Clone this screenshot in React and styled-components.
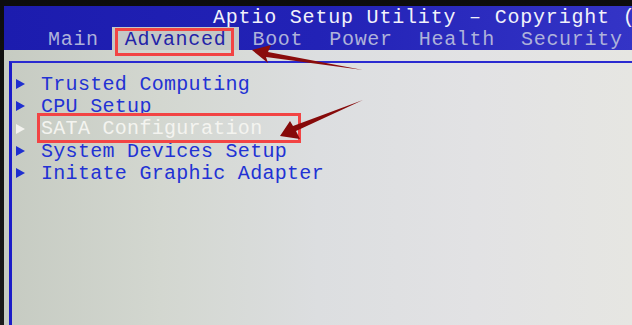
import styled, { createGlobalStyle } from "styled-components";

const GlobalStyle = createGlobalStyle`
  html, body {
    margin: 0;
    padding: 0;
    background: #111;
  }
  #root {
    width: 632px;
    height: 325px;
  }
`;

const Screen = styled.div`
  position: relative;
  width: 632px;
  height: 325px;
  overflow: hidden;
  display: flex;
  flex-direction: column;
  padding: 6px 0 0 4px;
  box-sizing: border-box;
  background: linear-gradient(180deg, #0d0d0d 0%, #1b1b1b 100%);
  font-family: "Liberation Mono", "DejaVu Sans Mono", monospace;
`;

const Header = styled.div`
  display: flex;
  flex-direction: column;
  height: 44px;
  background: linear-gradient(90deg, #1c1cae 0%, #2222b6 50%, #3434c6 100%);
`;

const Title = styled.div`
  height: 21px;
  line-height: 23px;
  padding-left: 209px;
  color: #f2f2fa;
  font-size: 20px;
  letter-spacing: 0.8px;
  white-space: nowrap;
  overflow: hidden;
`;

const Tabs = styled.div`
  display: flex;
  height: 23px;
  padding-left: 31px;
  white-space: nowrap;
  overflow: hidden;
`;

const Tab = styled.div`
  position: relative;
  padding: 0 13px;
  line-height: 25px;
  font-size: 20px;
  letter-spacing: 0.7px;
  color: ${(p) => (p.$active ? "#2424a8" : "#aeb2da")};
  background: ${(p) => (p.$active ? "#c4c8c6" : "transparent")};
`;

const Body = styled.div`
  flex: 1;
  display: flex;
  padding: 11px 0 0 5px;
  background: linear-gradient(
    90deg,
    #c6cbc2 0%,
    #d3d7d0 25%,
    #dcdee0 50%,
    #e2e2e4 75%,
    #e6e6e2 100%
  );
`;

const Frame = styled.div`
  flex: 1;
  border-top: 2px solid #2a2ad0;
  border-left: 3px solid #1c1cc8;
  padding: 10px 0 0 4px;
  display: flex;
  flex-direction: column;
`;

const Item = styled.div`
  display: flex;
  align-items: center;
  height: 22.3px;
  font-size: 20px;
  letter-spacing: 0.3px;
  white-space: nowrap;
  color: ${(p) => (p.$selected ? "#f4f4f0" : "#2232d4")};
`;

const Pointer = styled.span`
  width: 0;
  height: 0;
  border-top: 5.5px solid transparent;
  border-bottom: 5.5px solid transparent;
  border-left: 9px solid ${(p) => (p.$selected ? "#f4f4f0" : "#1f2fd0")};
  margin-right: 16px;
`;

const Mark = styled.div`
  position: absolute;
  border: 3px solid #f24444;
  box-sizing: border-box;
  pointer-events: none;
`;

const Arrows = styled.svg`
  position: absolute;
  left: 0;
  top: 0;
  pointer-events: none;
`;

const tabs = ["Main", "Advanced", "Boot", "Power", "Health", "Security"];

const items = [
  "Trusted Computing",
  "CPU Setup",
  "SATA Configuration",
  "System Devices Setup",
  "Initate Graphic Adapter",
];

export default function App() {
  return (
    <>
      <GlobalStyle />
      <Screen>
        <Header>
          <Title>Aptio Setup Utility – Copyright (C)</Title>
          <Tabs>
            {tabs.map((t) => (
              <Tab key={t} $active={t === "Advanced"}>
                {t}
              </Tab>
            ))}
          </Tabs>
        </Header>
        <Body>
          <Frame>
            {items.map((it, i) => (
              <Item key={it} $selected={i === 2}>
                <Pointer $selected={i === 2} />
                {it}
              </Item>
            ))}
          </Frame>
        </Body>

        <Mark style={{ left: 115, top: 28, width: 119, height: 28 }} />
        <Mark style={{ left: 37, top: 113, width: 264, height: 30 }} />

        <Arrows width="632" height="325" viewBox="0 0 632 325">
          <polygon
            fill="#8a0c0c"
            points="252,50 271,45 268,52 363,70 266,57 268,63"
          />
          <polygon
            fill="#860a0a"
            points="280,136 290,121 293,126 363,100 296,131 300,139"
          />
        </Arrows>
      </Screen>
    </>
  );
}
